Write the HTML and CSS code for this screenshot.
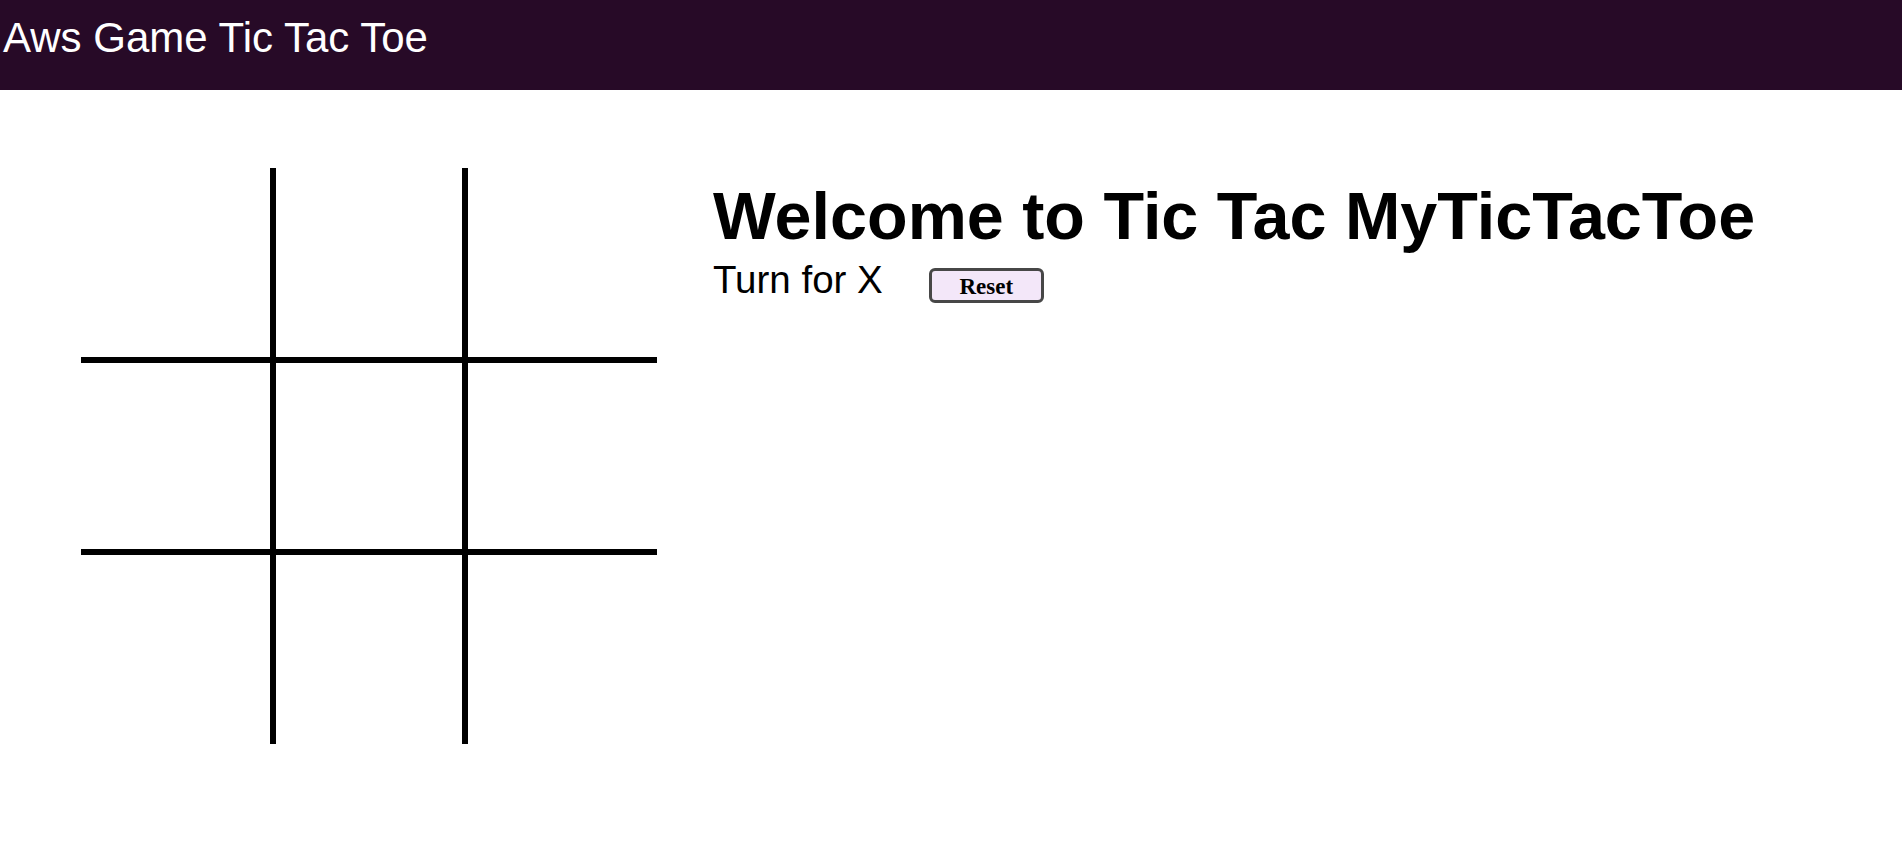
FILE: index.html
```html
<!DOCTYPE html>
<html>
<head>
<meta charset="utf-8">
<title>Aws Game Tic Tac Toe</title>
<link rel="stylesheet" href="styles.css">
</head>
<body>
<header class="topbar">
  <div class="brand">Aws Game Tic Tac Toe</div>
</header>
<main class="page">
  <div class="board">
    <div class="cell c-tl"></div>
    <div class="cell c-tm"></div>
    <div class="cell c-tr"></div>
    <div class="cell c-ml"></div>
    <div class="cell c-mm"></div>
    <div class="cell c-mr"></div>
    <div class="cell c-bl"></div>
    <div class="cell c-bm"></div>
    <div class="cell c-br"></div>
  </div>
  <section class="info">
    <h1 class="title">Welcome to Tic Tac MyTicTacToe</h1>
    <div class="status">
      <span class="turn">Turn for X</span>
      <button class="reset">Reset</button>
    </div>
  </section>
</main>
</body>
</html>
```
FILE: styles.css
```css
html, body {
  margin: 0;
  padding: 0;
  background: #ffffff;
}

.topbar {
  height: 90px;
  background: #270a27;
  box-sizing: border-box;
  padding: 14px 0 0 3px;
}

.brand {
  font-family: "Liberation Sans", Arial, sans-serif;
  font-size: 42px;
  line-height: 48px;
  color: #ffffff;
}

.page {
  display: flex;
  align-items: flex-start;
  padding: 78px 0 0 81px;
}

.board {
  display: grid;
  grid-template-columns: repeat(3, 192px);
  grid-template-rows: repeat(3, 192px);
}

.cell {
  box-sizing: border-box;
  border: 0 solid #000;
}

.c-tl { border-right-width: 3px; border-bottom-width: 3px; }
.c-tm { border-left-width: 3px; border-right-width: 3px; border-bottom-width: 3px; }
.c-tr { border-left-width: 3px; border-bottom-width: 3px; }
.c-ml { border-right-width: 3px; border-top-width: 3px; border-bottom-width: 3px; }
.c-mm { border-width: 3px; }
.c-mr { border-left-width: 3px; border-top-width: 3px; border-bottom-width: 3px; }
.c-bl { border-right-width: 3px; border-top-width: 3px; }
.c-bm { border-left-width: 3px; border-right-width: 3px; border-top-width: 3px; }
.c-br { border-left-width: 3px; border-top-width: 3px; }

.info {
  margin-left: 56px;
  padding-top: 11px;
}

.title {
  margin: 0;
  font-family: "Comic Sans MS", "Liberation Sans", Arial, sans-serif;
  font-weight: bold;
  font-size: 66.5px;
  line-height: 74px;
  color: #000;
  white-space: nowrap;
}

.status {
  display: flex;
  align-items: flex-start;
  margin-top: 6px;
}

.turn {
  font-family: "Comic Sans MS", "Liberation Sans", Arial, sans-serif;
  font-size: 38.5px;
  line-height: 42px;
  color: #000;
}

.reset {
  margin: 9px 0 0 46px;
  width: 115px;
  height: 35px;
  box-sizing: border-box;
  padding: 2px 0 0 0;
  border: 3px solid #474747;
  border-radius: 6px;
  background: #f3e7f9;
  font-family: "Liberation Serif", "Times New Roman", serif;
  font-weight: bold;
  font-size: 23px;
  line-height: 26px;
  color: #000;
}
```
